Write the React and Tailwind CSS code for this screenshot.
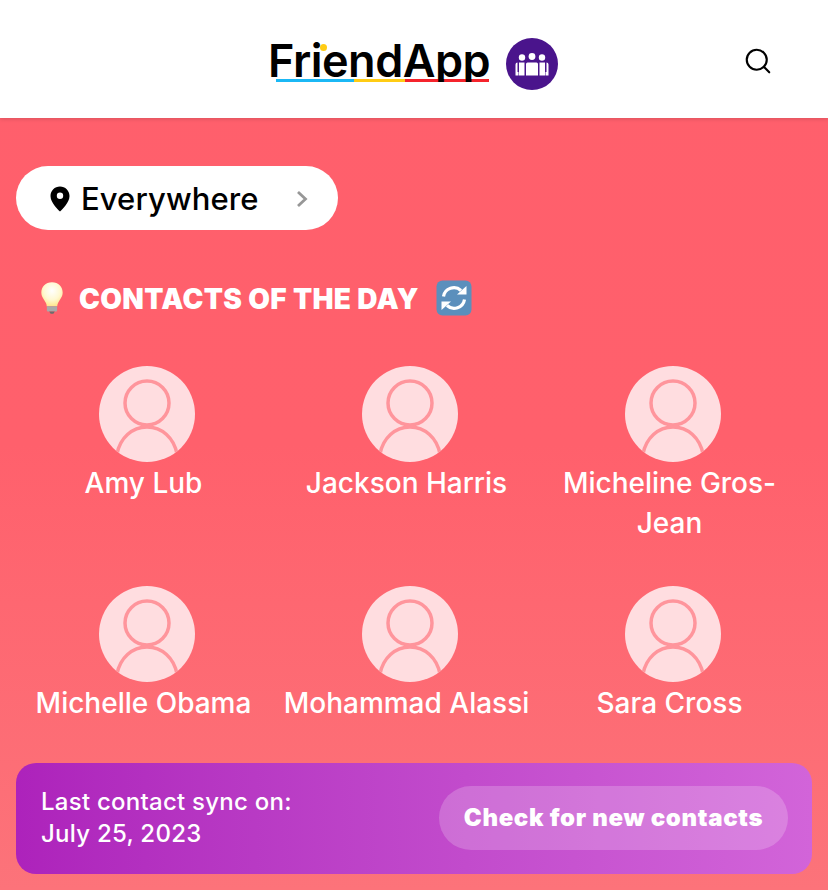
import { Search } from 'lucide-react';

const contacts = ['Amy Lub', 'Jackson Harris', 'Micheline Gros-Jean', 'Michelle Obama', 'Mohammad Alassi', 'Sara Cross'];

function GroupLogo() {
  return (
    <svg width="52" height="52" viewBox="0 0 52 52" className="shrink-0">
      <circle cx="26" cy="26" r="26" fill="#4a148c" />
      <g fill="#fff">
        <circle cx="16" cy="19.5" r="3.2" />
        <circle cx="26" cy="18.5" r="3.4" />
        <circle cx="36" cy="19.5" r="3.2" />
        <path d="M21.5 24.5h9q1.5 0 1.5 1.5v11.5H20V26q0-1.500 1.500-1.500z" />
        <path d="M13 24.500h5.500V37.500H13z" />
        <path d="M33.500 24.500H39V37.500h-5.500z" />
        <path d="M9.500 26.500q0-2 2-2v9.500h1v3.500H9.500z" />
        <path d="M42.500 26.500q0-2-2-2v9.500h-1v3.500h3z" />
      </g>
    </svg>
  );
}

function Bulb() {
  return (
    <svg width="26" height="36" viewBox="0 0 28 36">
      <defs>
        <radialGradient id="bulbGlow" cx="50%" cy="35%" r="65%">
          <stop offset="0%" stopColor="#ffffff" />
          <stop offset="60%" stopColor="#fff8d0" />
          <stop offset="100%" stopColor="#ffe68c" />
        </radialGradient>
      </defs>
      <path d="M14 1C7 1 2.500 6 2.500 12c0 5 3.500 8 5 11.500.6 1.500.8 2.500.8 3.500h11.400c0-1 .2-2 .8-3.500 1.500-3.500 5-6.500 5-11.500C25.500 6 21 1 14 1z" fill="url(#bulbGlow)" />
      <path d="M8.500 27h11v4.500q0 1-1 1h-9q-1 0-1-1z" fill="#a9a9a9" />
      <path d="M11 32.500h6L15.500 35h-3z" fill="#6d6d6d" />
    </svg>
  );
}

function SyncIcon() {
  return (
    <svg width="36" height="36" viewBox="0 0 36 36">
      <rect x="0.500" y="0.500" width="35" height="35" rx="6" fill="#5b8fbc" />
      <g fill="none" stroke="#fff" strokeWidth="3.200">
        <path d="M7.500 16.500A10.500 10.500 0 0 1 25 10.500" />
        <path d="M28.500 19.500A10.500 10.500 0 0 1 11 25.500" />
      </g>
      <path d="M21 14.500h9.500V6z" fill="#fff" />
      <path d="M15 21.500H5.500V30z" fill="#fff" />
    </svg>
  );
}

function Avatar() {
  return (
    <div className="w-24 h-24 ml-1.5 rounded-full bg-[#ffdde0] overflow-hidden">
      <svg width="96" height="96" viewBox="0 0 96 96" fill="none" stroke="#ff959c" strokeWidth="3.500">
        <circle cx="48" cy="37" r="22" />
        <path d="M18 88c3-16 15-27 30-27s27 11 30 27" />
      </svg>
    </div>
  );
}

export default function App() {
  return (
    <div className="w-[828px] h-[890px] overflow-hidden font-['Inter',sans-serif] bg-gradient-to-b from-[#ff5f6c] via-[#ff606c] to-[#fc737a]">
      <header className="relative h-[118px] pt-[10px] bg-white shadow-[0_1px_4px_rgba(0,0,0,0.15)] flex items-center justify-center">
        <div className="flex items-center gap-[17px]">
          <div className="relative h-[52px] w-[219px]">
            <div className="absolute left-[6px] right-0 top-[41px] h-[3px] flex">
              <div className="w-[78px] bg-[#1bb8f5]" />
              <div className="w-[51px] bg-[#ffcc14]" />
              <div className="flex-1 bg-[#f5242c]" />
            </div>
            <span className="absolute left-[-2px] top-[-4px] text-[45px] leading-[54px] font-semibold tracking-[-0.5px] text-black whitespace-nowrap">FriendApp</span>
            <div className="absolute left-0 right-0 top-[44px] h-[12px] bg-white" />
            <div className="absolute left-[50px] top-[6px] w-[7px] h-[7px] rounded-full bg-[#ffcc14]" />
          </div>
          <GroupLogo />
        </div>
        <Search className="absolute left-[743px] top-[46px] text-black" size={30} strokeWidth={1.700} />
      </header>

      <main className="px-4 pt-12">
        <div className="w-[322px] h-16 rounded-full bg-white flex items-center pl-[34px]">
          <svg width="20" height="26" viewBox="0 0 20 26" className="shrink-0 mt-[1px]">
            <path fillRule="evenodd" d="M10 0.500C4.700 0.500.500 4.700.500 10c0 6.500 7 13 9.500 15.500C12.500 23 19.500 16.500 19.500 10 19.500 4.700 15.300.500 10 .500zM10 13a3.200 3.200 0 1 1 0-6.400A3.200 3.200 0 0 1 10 13z" fill="#000" />
          </svg>
          <span className="ml-[11px] text-[31px] leading-none font-medium tracking-[0.1px] text-black">Everywhere</span>
          <svg width="12" height="18" viewBox="0 0 12 18" fill="none" stroke="#979797" strokeWidth="2.800" className="ml-[37px] mt-[1px]">
            <path d="M2 2l7.500 7L2 16" />
          </svg>
        </div>

        <div className="flex items-center h-9 mt-[50px] pl-[23px]">
          <Bulb />
          <h2 className="ml-[14px] pt-[1px] text-[28px] leading-9 font-black tracking-[0.35px] text-white">CONTACTS OF THE DAY</h2>
          <div className="ml-[17px]"><SyncIcon /></div>
        </div>

        <div className="grid grid-cols-3 w-[789px] -ml-[4px] mt-[50px] gap-y-[43px]">
          {contacts.map((name) => (
            <div key={name} className="flex flex-col items-center text-center">
              <Avatar />
              <p className="pt-[1px] text-[28px] leading-10 font-medium text-white">{name}</p>
            </div>
          ))}
        </div>

        <div className="flex items-center justify-between h-[111px] pb-[2px] mt-[40px] rounded-[20px] pl-[25px] pr-6 bg-gradient-to-r from-[#ad22bb] to-[#d264d9]">
          <p className="text-2xl leading-8 font-medium tracking-[0.25px] text-white">
            Last contact sync on:<br />July 25, 2023
          </p>
          <button className="w-[349px] h-16 rounded-full bg-white/20 text-2xl font-black tracking-[0.67px] text-white">
            Check for new contacts
          </button>
        </div>
      </main>
    </div>
  );
}
